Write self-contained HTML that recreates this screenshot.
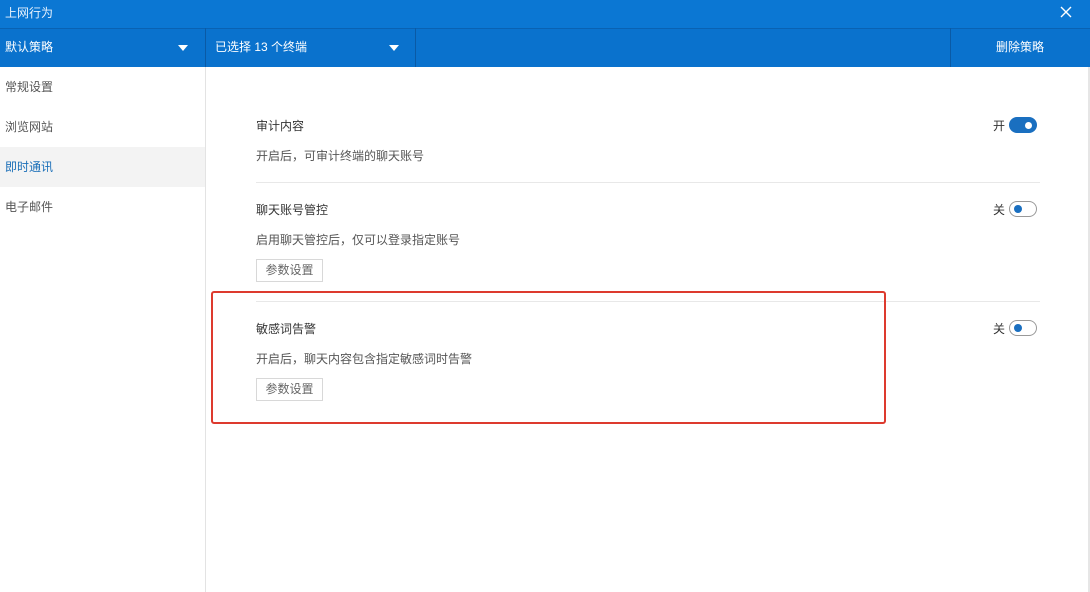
<!DOCTYPE html>
<html><head><meta charset="utf-8"><style>
*{margin:0;padding:0;box-sizing:border-box}
body{width:1090px;height:592px;overflow:hidden;background:#fff;font-family:"Liberation Sans","Noto Sans CJK SC",sans-serif;font-size:12px;color:#333;position:relative}
.a{position:absolute}
.title{left:0;top:0;width:1090px;height:28px;background:#0b77d3;color:#e8f2fc;line-height:26px;padding-left:5px}
.bar{left:0;top:28px;width:1090px;height:39px;background:#0a72cd;border-top:1px solid #0962b3;color:#fff;line-height:38px}
.sep{top:28px;width:1px;height:39px;background:#0a5aa5}
.tri{width:0;height:0;border-left:5px solid transparent;border-right:5px solid transparent;border-top:6px solid #fff}
.side{left:0;top:67px;width:206px;height:525px;border-right:1px solid #e3e3e3}
.item{left:0;width:205px;height:40px;line-height:40px;padding-left:5px;color:#555}
.t{left:256px;color:#333}
.d{left:256px;color:#555}
.hr{left:256px;width:784px;height:1px;background:#e8e8e8}
.btn{left:256px;width:67px;height:23px;border:1px solid #d8d8d8;color:#666;text-align:center;line-height:21px}
.lab{left:993px;color:#333}
.tg{left:1009px;width:28px;height:16px;border-radius:8px}
.on{background:#1a6fc0}
.on::after{content:"";position:absolute;right:5px;top:5px;width:7px;height:7px;border-radius:50%;background:#fff}
.off{border:1px solid #999;background:#fff}
.off::after{content:"";position:absolute;left:4px;top:3px;width:8px;height:8px;border-radius:50%;background:#1a6fc0}
</style></head><body>
<div class="a title">上网行为</div>
<svg class="a" style="left:1060px;top:6px" width="12" height="12"><path d="M1 1L11 11M11 1L1 11" stroke="#fff" stroke-width="1.4"/></svg>
<div class="a bar"></div>
<div class="a" style="left:5px;top:28px;line-height:39px;color:#fff">默认策略</div>
<div class="a tri" style="left:178px;top:45px"></div>
<div class="a sep" style="left:205px"></div>
<div class="a" style="left:215px;top:28px;line-height:39px;color:#fff">已选择 13 个终端</div>
<div class="a tri" style="left:389px;top:45px"></div>
<div class="a sep" style="left:415px"></div>
<div class="a sep" style="left:950px"></div>
<div class="a" style="left:996px;top:28px;line-height:39px;color:#fff">删除策略</div>
<div class="a side"></div>
<div class="a item" style="top:67px">常规设置</div>
<div class="a item" style="top:107px">浏览网站</div>
<div class="a item" style="top:147px;background:#f3f3f3;color:#1b6fb8">即时通讯</div>
<div class="a item" style="top:187px">电子邮件</div>

<div class="a t" style="top:117px">审计内容</div>
<div class="a d" style="top:147px">开启后，可审计终端的聊天账号</div>
<div class="a lab" style="top:117px">开</div>
<div class="a tg on" style="top:117px"></div>
<div class="a hr" style="top:182px"></div>

<div class="a t" style="top:201px">聊天账号管控</div>
<div class="a d" style="top:231px">启用聊天管控后，仅可以登录指定账号</div>
<div class="a btn" style="top:259px">参数设置</div>
<div class="a lab" style="top:201px">关</div>
<div class="a tg off" style="top:201px"></div>
<div class="a hr" style="top:301px"></div>

<div class="a t" style="top:320px">敏感词告警</div>
<div class="a d" style="top:350px">开启后，聊天内容包含指定敏感词时告警</div>
<div class="a btn" style="top:378px">参数设置</div>
<div class="a lab" style="top:320px">关</div>
<div class="a tg off" style="top:320px"></div>

<div class="a" style="left:211px;top:291px;width:675px;height:133px;border:2.5px solid #dd3a2e;border-radius:3px"></div>
<div class="a" style="left:1088px;top:67px;width:2px;height:525px;background:#e6e6e6"></div>
</body></html>
